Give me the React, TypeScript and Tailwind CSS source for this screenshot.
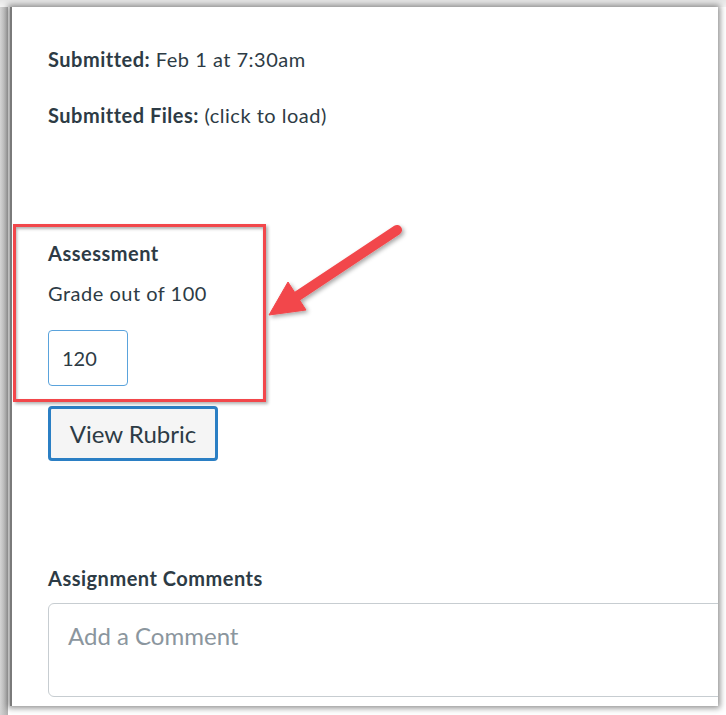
import React from "react";

export default function App() {
  return (
    <div className="relative w-[726px] h-[715px] overflow-hidden bg-[linear-gradient(to_right,#d4d4d4,#b0b0b0_8px,#ffffff_8px)]" style={{ fontFamily: "Lato, 'Open Sans', sans-serif" }}>
      <div className="absolute inset-0 bg-[linear-gradient(to_bottom,#e6e6e6,#f4f4f4_7px,transparent_7px)] pointer-events-none" />
      <div className="relative ml-[10px] mt-[7px] w-[708px] h-[699px] bg-white border-l-2 border-[#7a7a7a] overflow-hidden shadow-[0_0_6px_2px_rgba(0,0,0,0.45)] text-[#2d3b45]">
        <div className="pl-[36px] pt-[40px]">
          <p className="text-[20px] leading-[24px] tracking-[0.5px]">
            <span className="font-bold">Submitted:</span> Feb 1 at 7:30am
          </p>
          <p className="mt-[32px] text-[20px] leading-[24px] tracking-[0.5px]">
            <span className="font-bold">Submitted Files:</span> (click to load)
          </p>
          <p className="mt-[114px] text-[20px] leading-[24px] tracking-[0.5px] font-bold">Assessment</p>
          <p className="mt-[16px] text-[20px] leading-[24px] tracking-[0.5px]">Grade out of 100</p>
          <div className="mt-[25px] w-[80px] h-[56px] rounded-[4px] border border-[#5aa3dc] flex items-center pl-[13px] text-[20px]">
            120
          </div>
          <div className="mt-[20px] w-[170px] h-[55px] rounded-[4px] border-[3px] border-[#2b7fc4] bg-[#f5f5f5] flex items-center justify-center text-[24px]">
            View Rubric
          </div>
          <p className="mt-[105px] text-[20px] leading-[24px] font-bold tracking-[0.5px]">Assignment Comments</p>
          <div className="mt-[13px] w-[700px] h-[94px] rounded-[6px] border border-[#c7cdd1] pl-[19px] pt-[16px] text-[24px] leading-[32px] text-[#8b969e]">
            Add a Comment
          </div>
        </div>
      </div>

      {/* annotation box */}
      <div className="absolute left-[13px] top-[224px] w-[253px] h-[178px] border-[3px] border-[#f2474b] shadow-[inset_1px_2px_3px_rgba(0,0,0,0.3),2px_2px_3px_rgba(0,0,0,0.3)]" />

      {/* arrow */}
      <svg className="absolute left-0 top-0" width="726" height="715" viewBox="0 0 726 715">
        <defs>
          <filter id="sh" x="-20%" y="-20%" width="140%" height="140%">
            <feDropShadow dx="2" dy="2" stdDeviation="2" floodColor="#000" floodOpacity="0.35" />
          </filter>
        </defs>
        <g filter="url(#sh)" fill="#f2474b" stroke="#f2474b">
          <line x1="397" y1="230" x2="296" y2="297" strokeWidth="10" strokeLinecap="round" />
          <polygon points="269,315 288,282 306,310" strokeWidth="1" strokeLinejoin="round" />
        </g>
      </svg>
    </div>
  );
}
